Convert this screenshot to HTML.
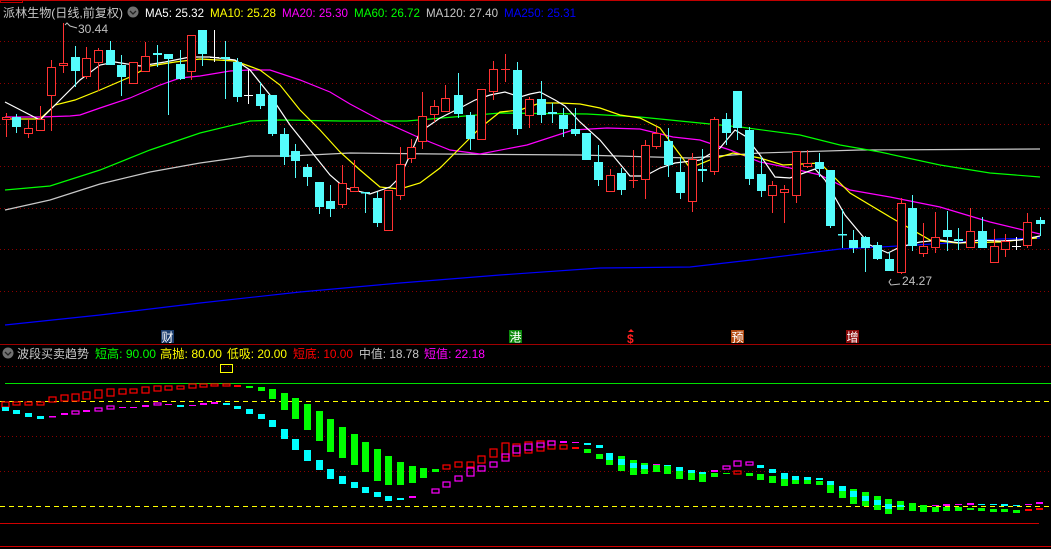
<!DOCTYPE html>
<html><head><meta charset="utf-8"><style>
html,body{margin:0;padding:0;background:#000;width:1051px;height:549px;overflow:hidden}
svg{display:block}
text{font-family:"Liberation Sans","Noto Sans CJK SC",sans-serif;font-size:12px}
.r line{stroke:#ff3232;stroke-width:1}
.r rect{fill:#000;stroke:#ff3232;stroke-width:1}
.c line{stroke:#54fcfc;stroke-width:1}
.c rect{fill:#54fcfc}
.w line{stroke:#fff;stroke-width:1}
.g{fill:#00ff00}.cy{fill:#00ffff}.m{fill:#ff00ff}.rd{fill:#ff0000}
.hm{fill:none;stroke:#ff00ff;stroke-width:1.2}.hr{fill:none;stroke:#ff0000;stroke-width:1.2}
</style></head><body>
<svg width="1051" height="549" xmlns="http://www.w3.org/2000/svg">
<rect width="1051" height="549" fill="#000"/>
<line x1="0" y1="0.5" x2="1051" y2="0.5" stroke="#c00000"/>
<rect x="0.5" y="0.5" width="22" height="2" fill="none" stroke="#c00000"/>
<g stroke="#8a0000" stroke-dasharray="1,3">
<line x1="0" y1="41.5" x2="1051" y2="41.5"/><line x1="0" y1="83.5" x2="1051" y2="83.5"/>
<line x1="0" y1="124.5" x2="1051" y2="124.5"/><line x1="0" y1="166.5" x2="1051" y2="166.5"/>
<line x1="0" y1="208.5" x2="1051" y2="208.5"/><line x1="0" y1="249.5" x2="1051" y2="249.5"/>
<line x1="0" y1="291.5" x2="1051" y2="291.5"/>
<line x1="0" y1="366.5" x2="1051" y2="366.5"/><line x1="0" y1="436.5" x2="1051" y2="436.5"/><line x1="0" y1="471.5" x2="1051" y2="471.5"/>
</g>
<g fill="none" stroke-width="1.2">
<polyline stroke="#0000ff" points="5,325 100,315 200,303 300,292 400,283 500,275 600,268 690,267 760,259 840,249 880,247 950,243 1000,239 1040,238"/>
<polyline stroke="#c8c8c8" points="5,210 50,200 100,184 150,172 200,163 250,156 290,156 350,153 440,154 580,155 690,158 760,153 860,150 1040,149"/>
<polyline stroke="#00ff00" points="5,190 50,186 100,170 150,150 200,133 250,121 280,120 340,121 407,121 500,113 587,114 640,117 690,122 740,127 800,135 840,145 880,152 940,165 990,173 1040,177"/>
<polyline stroke="#ff00ff" points="5,117 40,117 70,116 80,115 100,108 130,98 160,85 180,78 200,76 230,71 250,70 270,70 300,80 330,92 350,104 380,120 420,138 450,150 480,154 527,145 573,130 607,128 640,129 673,137 700,140 730,150 760,162 790,168 820,175 850,190 890,197 940,207 990,222 1040,234"/>
<polyline stroke="#ffff00" points="5,119 40,119 55,105 75,100 100,90 130,77 150,66 175,62 200,59 235,61 260,70 280,85 300,110 320,130 340,152 360,170 380,187 400,189 420,183 440,168 460,148 480,128 500,112 520,110 540,103 560,103 580,104 600,108 620,115 640,118 660,128 690,168 710,160 733,153 760,158 783,165 820,163 850,193 890,217 930,240 957,243 1000,242 1037,238"/>
<polyline stroke="#ffffff" points="5,102 40,120 60,100 80,80 100,65 115,62 140,66 165,62 190,57 210,57 235,60 250,70 270,95 290,125 310,150 330,175 345,188 370,194 390,187 400,177 410,155 420,132 440,118 460,108 475,100 490,95 505,92 520,97 530,94 540,92 555,100 565,106 580,122 600,140 615,158 630,176 645,176 660,168 675,163 700,160 720,148 735,130 745,136 760,155 775,177 790,178 815,169 825,180 845,215 870,245 888,253 900,247 920,242 940,240 960,243 980,240 1000,241 1020,240 1040,236"/>
</g>
<g class="r">
<line x1="6.5" y1="113" x2="6.5" y2="137"/><rect x="2.5" y="117.5" width="8" height="2"/>
<line x1="28.5" y1="119" x2="28.5" y2="138"/><rect x="24.5" y="128.5" width="8" height="5"/>
<line x1="40.5" y1="106" x2="40.5" y2="130"/><rect x="36.5" y="119.5" width="8" height="11"/>
<line x1="51.5" y1="60" x2="51.5" y2="131"/><rect x="47.5" y="67.5" width="8" height="28"/>
<line x1="63.5" y1="23" x2="63.5" y2="73"/><rect x="59.5" y="63.5" width="8" height="2"/>
<line x1="86.5" y1="47" x2="86.5" y2="79"/><rect x="82.5" y="58.5" width="8" height="18"/>
<line x1="98.5" y1="48" x2="98.5" y2="91"/><rect x="94.5" y="50.5" width="8" height="12"/>
<line x1="133.5" y1="62" x2="133.5" y2="83"/><rect x="129.5" y="62.5" width="8" height="21"/>
<line x1="145.5" y1="42" x2="145.5" y2="71"/><rect x="141.5" y="56.5" width="8" height="15"/>
<line x1="191.5" y1="35" x2="191.5" y2="80"/><rect x="187.5" y="35.5" width="8" height="36"/>
<line x1="342.5" y1="165" x2="342.5" y2="208"/><rect x="338.5" y="183.5" width="8" height="21"/>
<line x1="354.5" y1="160" x2="354.5" y2="191"/><rect x="350.5" y="187.5" width="8" height="4"/>
<line x1="388.5" y1="190" x2="388.5" y2="230"/><rect x="384.5" y="190.5" width="8" height="40"/>
<line x1="400.5" y1="147" x2="400.5" y2="200"/><rect x="396.5" y="164.5" width="8" height="31"/>
<line x1="411.5" y1="139" x2="411.5" y2="163"/><rect x="407.5" y="147.5" width="8" height="11"/>
<line x1="422.5" y1="92" x2="422.5" y2="149"/><rect x="418.5" y="116.5" width="8" height="25"/>
<line x1="434.5" y1="100" x2="434.5" y2="122"/><rect x="430.5" y="106.5" width="8" height="8"/>
<line x1="445.5" y1="85" x2="445.5" y2="111"/><rect x="441.5" y="98.5" width="8" height="13"/>
<line x1="481.5" y1="89" x2="481.5" y2="139"/><rect x="477.5" y="89.5" width="8" height="50"/>
<line x1="493.5" y1="61" x2="493.5" y2="100"/><rect x="489.5" y="69.5" width="8" height="22"/>
<line x1="505.5" y1="54" x2="505.5" y2="82"/><line x1="501" y1="69.5" x2="510" y2="69.5"/>
<line x1="529.5" y1="97" x2="529.5" y2="128"/><rect x="525.5" y="99.5" width="8" height="16"/>
<line x1="610.5" y1="169" x2="610.5" y2="191"/><rect x="606.5" y="175.5" width="8" height="16"/>
<line x1="633.5" y1="150" x2="633.5" y2="188"/><line x1="629" y1="180.5" x2="638" y2="180.5"/>
<line x1="645.5" y1="140" x2="645.5" y2="199"/><rect x="641.5" y="145.5" width="8" height="34"/>
<line x1="656.5" y1="127" x2="656.5" y2="149"/><rect x="652.5" y="133.5" width="8" height="13"/>
<line x1="692.5" y1="153" x2="692.5" y2="212"/><rect x="688.5" y="159.5" width="8" height="42"/>
<line x1="714.5" y1="117" x2="714.5" y2="175"/><rect x="710.5" y="119.5" width="8" height="52"/>
<line x1="772.5" y1="181" x2="772.5" y2="213"/><rect x="768.5" y="185.5" width="8" height="10"/>
<line x1="784.5" y1="185" x2="784.5" y2="223"/><rect x="780.5" y="189.5" width="8" height="3"/>
<line x1="796.5" y1="151" x2="796.5" y2="203"/><rect x="792.5" y="151.5" width="8" height="44"/>
<line x1="807.5" y1="150" x2="807.5" y2="168"/><rect x="803.5" y="163.5" width="8" height="3"/>
<line x1="901.5" y1="198" x2="901.5" y2="274"/><rect x="897.5" y="203.5" width="8" height="69"/>
<line x1="923.5" y1="223" x2="923.5" y2="257"/><rect x="919.5" y="246.5" width="8" height="7"/>
<line x1="935.5" y1="212" x2="935.5" y2="253"/><rect x="931.5" y="237.5" width="8" height="10"/>
<line x1="970.5" y1="208" x2="970.5" y2="247"/><rect x="966.5" y="231.5" width="8" height="16"/>
<line x1="994.5" y1="229" x2="994.5" y2="263"/><rect x="990.5" y="246.5" width="8" height="16"/>
<line x1="1005.5" y1="234" x2="1005.5" y2="257"/><rect x="1001.5" y="241.5" width="8" height="8"/>
<line x1="1027.5" y1="213" x2="1027.5" y2="248"/><rect x="1023.5" y="222.5" width="8" height="23"/>
</g>
<g class="c">
<line x1="16.5" y1="114" x2="16.5" y2="133"/><rect x="12" y="117" width="9" height="10"/>
<line x1="75.5" y1="46" x2="75.5" y2="87"/><rect x="71" y="57" width="9" height="14"/>
<line x1="110.5" y1="41" x2="110.5" y2="65"/><rect x="106" y="50" width="9" height="15"/>
<line x1="121.5" y1="55" x2="121.5" y2="96"/><rect x="117" y="65" width="9" height="12"/>
<line x1="157.5" y1="45" x2="157.5" y2="67"/><rect x="153" y="53" width="9" height="2"/>
<line x1="168.5" y1="54" x2="168.5" y2="115"/><rect x="164" y="54" width="9" height="5"/>
<line x1="180.5" y1="50" x2="180.5" y2="80"/><rect x="176" y="64" width="9" height="15"/>
<line x1="202.5" y1="30" x2="202.5" y2="66"/><rect x="198" y="30" width="9" height="24"/>
<line x1="225.5" y1="41" x2="225.5" y2="99"/><rect x="221" y="57" width="9" height="2"/>
<line x1="237.5" y1="58" x2="237.5" y2="102"/><rect x="233" y="62" width="9" height="35"/>
<line x1="260.5" y1="82" x2="260.5" y2="109"/><rect x="256" y="94" width="9" height="12"/>
<line x1="272.5" y1="95" x2="272.5" y2="136"/><rect x="268" y="95" width="9" height="39"/>
<line x1="284.5" y1="128" x2="284.5" y2="165"/><rect x="280" y="134" width="9" height="23"/>
<line x1="295.5" y1="144" x2="295.5" y2="178"/><rect x="291" y="151" width="9" height="10"/>
<line x1="307.5" y1="164" x2="307.5" y2="186"/><rect x="303" y="167" width="9" height="10"/>
<line x1="319.5" y1="182" x2="319.5" y2="214"/><rect x="315" y="182" width="9" height="25"/>
<line x1="330.5" y1="185" x2="330.5" y2="217"/><rect x="326" y="201" width="9" height="8"/>
<line x1="365.5" y1="192" x2="365.5" y2="213"/><rect x="361" y="192" width="9" height="1.5"/>
<line x1="377.5" y1="192" x2="377.5" y2="227"/><rect x="373" y="198" width="9" height="25"/>
<line x1="458.5" y1="73" x2="458.5" y2="118"/><rect x="454" y="95" width="9" height="19"/>
<line x1="470.5" y1="112" x2="470.5" y2="150"/><rect x="466" y="115" width="9" height="24"/>
<line x1="517.5" y1="62" x2="517.5" y2="135"/><rect x="513" y="70" width="9" height="59"/>
<line x1="541.5" y1="81" x2="541.5" y2="123"/><rect x="537" y="99" width="9" height="16"/>
<line x1="552.5" y1="103" x2="552.5" y2="123"/><rect x="548" y="112" width="9" height="2"/>
<line x1="563.5" y1="108" x2="563.5" y2="137"/><rect x="559" y="115" width="9" height="14"/>
<line x1="575.5" y1="108" x2="575.5" y2="136"/><rect x="571" y="129" width="9" height="5"/>
<line x1="586.5" y1="133" x2="586.5" y2="160"/><rect x="582" y="133" width="9" height="27"/>
<line x1="598.5" y1="145" x2="598.5" y2="186"/><rect x="594" y="162" width="9" height="18"/>
<line x1="621.5" y1="168" x2="621.5" y2="195"/><rect x="617" y="173" width="9" height="17"/>
<line x1="668.5" y1="128" x2="668.5" y2="177"/><rect x="664" y="141" width="9" height="24"/>
<line x1="680.5" y1="158" x2="680.5" y2="199"/><rect x="676" y="172" width="9" height="21"/>
<line x1="702.5" y1="149" x2="702.5" y2="182"/><rect x="698" y="169" width="9" height="2"/>
<line x1="726.5" y1="113" x2="726.5" y2="145"/><rect x="722" y="119" width="9" height="14"/>
<line x1="737.5" y1="91" x2="737.5" y2="140"/><rect x="733" y="91" width="9" height="37"/>
<line x1="749.5" y1="127" x2="749.5" y2="185"/><rect x="745" y="130" width="9" height="49"/>
<line x1="761.5" y1="157" x2="761.5" y2="197"/><rect x="757" y="174" width="9" height="17"/>
<line x1="819.5" y1="153" x2="819.5" y2="177"/><rect x="815" y="162" width="9" height="7"/>
<line x1="830.5" y1="170" x2="830.5" y2="228"/><rect x="826" y="170" width="9" height="56"/>
<line x1="842.5" y1="209" x2="842.5" y2="248"/><rect x="838" y="234" width="9" height="1.5"/>
<line x1="853.5" y1="230" x2="853.5" y2="253"/><rect x="849" y="240" width="9" height="8"/>
<line x1="865.5" y1="236" x2="865.5" y2="272"/><rect x="861" y="237" width="9" height="11"/>
<line x1="877.5" y1="242" x2="877.5" y2="260"/><rect x="873" y="245" width="9" height="14"/>
<line x1="889.5" y1="252" x2="889.5" y2="271"/><rect x="885" y="259" width="9" height="12"/>
<line x1="912.5" y1="195" x2="912.5" y2="251"/><rect x="908" y="208" width="9" height="38"/>
<line x1="947.5" y1="211" x2="947.5" y2="251"/><rect x="943" y="230" width="9" height="7"/>
<line x1="958.5" y1="228" x2="958.5" y2="250"/><rect x="954" y="239" width="9" height="2"/>
<line x1="982.5" y1="217" x2="982.5" y2="248"/><rect x="978" y="231" width="9" height="17"/>
<line x1="1040.5" y1="217" x2="1040.5" y2="236"/><rect x="1036" y="220" width="9" height="4"/>
</g>
<g class="w">
<line x1="214.5" y1="30" x2="214.5" y2="62"/><line x1="210" y1="57.5" x2="219" y2="57.5"/>
<line x1="248.5" y1="70" x2="248.5" y2="104"/><line x1="244" y1="95.5" x2="253" y2="95.5"/>
<line x1="1016.5" y1="237" x2="1016.5" y2="250"/><line x1="1012" y1="246.5" x2="1021" y2="246.5"/>
</g>
<polyline points="65,25 67,23 70,26 77,28" fill="none" stroke="#c0c0c0"/>
<text x="78" y="33" fill="#c0c0c0">30.44</text>
<polyline points="891,279 889,282 891,285 900,284" fill="none" stroke="#c0c0c0"/>
<text x="902" y="285" fill="#c0c0c0">24.27</text>
<text x="3" y="17" fill="#c8c8c8" font-size="13" textLength="120" lengthAdjust="spacingAndGlyphs">派林生物(日线,前复权)</text>
<circle cx="133" cy="12" r="5.5" fill="#707070"/><polyline points="130,11 133,14 136,11" fill="none" stroke="#222" stroke-width="1.3"/>
<text x="145" y="17" fill="#ffffff" textLength="59" lengthAdjust="spacingAndGlyphs">MA5: 25.32</text>
<text x="210" y="17" fill="#ffff00" textLength="66" lengthAdjust="spacingAndGlyphs">MA10: 25.28</text>
<text x="282" y="17" fill="#ff00ff" textLength="66" lengthAdjust="spacingAndGlyphs">MA20: 25.30</text>
<text x="354" y="17" fill="#00ff00" textLength="66" lengthAdjust="spacingAndGlyphs">MA60: 26.72</text>
<text x="426" y="17" fill="#c8c8c8" textLength="72" lengthAdjust="spacingAndGlyphs">MA120: 27.40</text>
<text x="504" y="17" fill="#0000ff" textLength="72" lengthAdjust="spacingAndGlyphs">MA250: 25.31</text>
<rect x="161" y="330" width="13" height="13" fill="#1a3c6c"/><text x="161.5" y="341.5" fill="#fff">财</text>
<rect x="509" y="330" width="13" height="13" fill="#0b8a0b"/><text x="509.5" y="341.5" fill="#fff">港</text>
<text x="627" y="343" fill="#ff2020" font-weight="bold">$</text><polygon points="631,329 628,332 634,332" fill="#ff2020"/>
<rect x="731" y="330" width="13" height="13" fill="#b24a12"/><text x="731.5" y="341.5" fill="#fff">预</text>
<rect x="846" y="330" width="13" height="13" fill="#8a0a0a"/><text x="846.5" y="341.5" fill="#fff">增</text>
<line x1="0" y1="344.5" x2="1051" y2="344.5" stroke="#a00000"/>
<circle cx="8" cy="353" r="5.5" fill="#707070"/><polyline points="5,352 8,355 11,352" fill="none" stroke="#222" stroke-width="1.3"/>
<text x="17" y="358" fill="#c8c8c8" textLength="72" lengthAdjust="spacingAndGlyphs">波段买卖趋势</text>
<text x="95" y="358" fill="#00ff00" textLength="61" lengthAdjust="spacingAndGlyphs">短高: 90.00</text>
<text x="160" y="358" fill="#ffff00" textLength="62" lengthAdjust="spacingAndGlyphs">高抛: 80.00</text>
<text x="227" y="358" fill="#ffff00" textLength="60" lengthAdjust="spacingAndGlyphs">低吸: 20.00</text>
<text x="293" y="358" fill="#ff0000" textLength="60" lengthAdjust="spacingAndGlyphs">短底: 10.00</text>
<text x="359" y="358" fill="#c8c8c8" textLength="60" lengthAdjust="spacingAndGlyphs">中值: 18.78</text>
<text x="424" y="358" fill="#ff00ff" textLength="61" lengthAdjust="spacingAndGlyphs">短值: 22.18</text>
<rect x="220.5" y="364.5" width="12" height="8" fill="none" stroke="#ffff00"/>
<line x1="5" y1="383.5" x2="1051" y2="383.5" stroke="#00e000"/>
<line x1="0" y1="401.5" x2="1051" y2="401.5" stroke="#ffff00" stroke-dasharray="5,4"/>
<line x1="0" y1="506.5" x2="1051" y2="506.5" stroke="#ffff00" stroke-dasharray="5,4"/>
<line x1="0" y1="523.5" x2="1039" y2="523.5" stroke="#d00000"/>
<line x1="0" y1="546.5" x2="1051" y2="546.5" stroke="#d00000"/>
<g class="hr">
<rect x="2" y="402" width="7" height="5"/><rect x="13" y="402" width="7" height="3"/><rect x="25" y="402" width="7" height="3"/><rect x="37" y="402" width="7" height="3"/>
<rect x="49" y="397" width="7" height="5"/><rect x="61" y="395" width="7" height="6"/><rect x="72" y="394" width="7" height="7"/><rect x="83" y="392" width="7" height="7"/>
<rect x="95" y="390" width="7" height="8"/><rect x="107" y="389" width="7" height="7"/><rect x="119" y="389" width="7" height="5"/><rect x="130" y="389" width="7" height="4"/>
<rect x="142" y="387" width="7" height="6"/><rect x="154" y="386" width="7" height="5"/><rect x="165" y="386" width="7" height="4"/><rect x="177" y="386" width="7" height="3"/>
<rect x="189" y="384" width="7" height="4"/><rect x="200" y="384" width="7" height="3"/><rect x="211" y="384" width="7" height="2"/><rect x="223" y="384" width="7" height="2"/>
<rect x="443" y="465" width="7" height="4"/><rect x="455" y="462" width="7" height="5"/><rect x="467" y="462" width="7" height="5"/><rect x="478" y="456" width="7" height="7"/>
<rect x="490" y="449" width="7" height="8"/><rect x="502" y="443" width="7" height="14"/><rect x="513" y="444" width="7" height="12"/><rect x="525" y="442" width="7" height="11"/>
<rect x="537" y="441" width="7" height="10"/><rect x="548" y="441" width="7" height="8"/><rect x="560" y="445" width="7" height="4"/>
<rect x="734" y="471" width="7" height="3"/>
</g>
<rect class="rd" x="234" y="385" width="7" height="2"/>
<rect class="rd" x="572" y="447" width="7" height="2"/>
<rect class="rd" x="1025" y="509" width="7" height="2"/><rect class="rd" x="1036" y="508" width="7" height="2"/>
<g class="g">
<rect x="246" y="386" width="7" height="2"/><rect x="258" y="387" width="7" height="4"/><rect x="269" y="389" width="7" height="10"/>
<rect x="281" y="393" width="7" height="17"/><rect x="292" y="398" width="7" height="21"/><rect x="304" y="404" width="7" height="26"/>
<rect x="316" y="411" width="7" height="30"/><rect x="327" y="419" width="7" height="33"/><rect x="339" y="427" width="7" height="31"/>
<rect x="351" y="434" width="7" height="31"/><rect x="362" y="442" width="7" height="30"/><rect x="374" y="449" width="7" height="32"/>
<rect x="385" y="456" width="7" height="29"/><rect x="397" y="462" width="7" height="23"/><rect x="409" y="466" width="7" height="17"/>
<rect x="420" y="468" width="7" height="10"/><rect x="432" y="469" width="7" height="3"/>
<rect x="584" y="449" width="7" height="4"/><rect x="596" y="454" width="7" height="5"/><rect x="606" y="460" width="7" height="5"/>
<rect x="618" y="456" width="7" height="15"/><rect x="630" y="460" width="7" height="15"/><rect x="641" y="463" width="7" height="11"/>
<rect x="653" y="465" width="7" height="7"/><rect x="664" y="465" width="7" height="9"/><rect x="676" y="471" width="7" height="8"/>
<rect x="688" y="473" width="7" height="7"/><rect x="699" y="474" width="7" height="8"/><rect x="711" y="473" width="7" height="4"/>
<rect x="723" y="473" width="7" height="1"/><rect x="746" y="473" width="7" height="3"/><rect x="757" y="474" width="7" height="6"/>
<rect x="769" y="476" width="7" height="7"/><rect x="781" y="479" width="7" height="7"/><rect x="792" y="480" width="7" height="4"/>
<rect x="804" y="480" width="7" height="4"/><rect x="816" y="481" width="7" height="4"/><rect x="827" y="485" width="7" height="8"/>
<rect x="839" y="491" width="7" height="7"/><rect x="850" y="489" width="7" height="15"/><rect x="862" y="492" width="7" height="14"/>
<rect x="874" y="496" width="7" height="14"/><rect x="885" y="499" width="7" height="15"/><rect x="897" y="501" width="7" height="9"/>
<rect x="909" y="503" width="7" height="8"/><rect x="920" y="505" width="7" height="7"/><rect x="932" y="507" width="7" height="5"/>
<rect x="943" y="507" width="7" height="4"/><rect x="955" y="507" width="7" height="4"/><rect x="967" y="508" width="7" height="2"/>
<rect x="978" y="508" width="7" height="3"/><rect x="990" y="509" width="7" height="3"/><rect x="1001" y="509" width="7" height="3"/><rect x="1013" y="510" width="7" height="3"/>
</g>
<g class="cy">
<rect x="2" y="407" width="7" height="4"/><rect x="13" y="410" width="7" height="4"/><rect x="25" y="413" width="7" height="4"/><rect x="37" y="416" width="7" height="3"/>
<rect x="177" y="405" width="7" height="2"/><rect x="223" y="403" width="7" height="2"/><rect x="234" y="406" width="7" height="3"/>
<rect x="246" y="409" width="7" height="5"/><rect x="258" y="414" width="7" height="5"/><rect x="269" y="420" width="7" height="7"/>
<rect x="281" y="429" width="7" height="10"/><rect x="292" y="439" width="7" height="11"/><rect x="304" y="450" width="7" height="11"/>
<rect x="316" y="460" width="7" height="10"/><rect x="327" y="469" width="7" height="10"/><rect x="339" y="476" width="7" height="8"/>
<rect x="351" y="482" width="7" height="6"/><rect x="362" y="487" width="7" height="6"/><rect x="374" y="492" width="7" height="5"/>
<rect x="385" y="496" width="7" height="5"/><rect x="397" y="498" width="7" height="2"/>
<rect x="584" y="443" width="7" height="2"/><rect x="596" y="445" width="7" height="3"/><rect x="606" y="453" width="7" height="7"/>
<rect x="618" y="459" width="7" height="6"/><rect x="630" y="463" width="7" height="5"/><rect x="641" y="465" width="7" height="4"/>
<rect x="664" y="465" width="7" height="1"/><rect x="676" y="467" width="7" height="4"/><rect x="688" y="470" width="7" height="3"/><rect x="699" y="472" width="7" height="2"/>
<rect x="757" y="465" width="7" height="3"/><rect x="769" y="469" width="7" height="4"/><rect x="781" y="473" width="7" height="6"/>
<rect x="792" y="476" width="7" height="4"/><rect x="804" y="477" width="7" height="3"/><rect x="816" y="478" width="7" height="2"/>
<rect x="827" y="481" width="7" height="4"/><rect x="839" y="486" width="7" height="5"/><rect x="850" y="491" width="7" height="6"/>
<rect x="862" y="496" width="7" height="5"/><rect x="874" y="500" width="7" height="5"/><rect x="885" y="504" width="7" height="5"/>
<rect x="897" y="505" width="7" height="2"/><rect x="978" y="504" width="7" height="1"/><rect x="990" y="504" width="7" height="1"/><rect x="1001" y="504" width="7" height="2"/><rect x="1013" y="505" width="7" height="1"/>
</g>
<g class="m">
<rect x="49" y="416" width="7" height="1.5"/><rect x="61" y="413" width="7" height="2"/><rect x="83" y="410" width="7" height="2"/>
<rect x="119" y="407" width="7" height="1"/><rect x="130" y="407" width="7" height="1"/><rect x="142" y="405" width="7" height="2"/>
<rect x="165" y="404" width="7" height="1"/><rect x="189" y="405" width="7" height="1"/><rect x="200" y="403" width="7" height="2"/><rect x="211" y="402" width="7" height="2"/>
<rect x="409" y="496" width="7" height="2"/><rect x="560" y="441" width="7" height="2"/><rect x="572" y="442" width="7" height="1"/>
<rect x="653" y="464" width="7" height="1"/><rect x="711" y="470" width="7" height="2"/>
<rect x="932" y="505" width="7" height="1"/><rect x="943" y="504" width="7" height="2"/><rect x="955" y="504" width="7" height="1"/>
<rect x="967" y="503" width="7" height="2"/><rect x="1025" y="504" width="7" height="1"/><rect x="1036" y="502" width="7" height="2"/>
</g>
<g class="hm">
<rect x="72" y="411" width="7" height="3"/><rect x="95" y="408" width="7" height="3"/><rect x="107" y="406" width="7" height="3"/><rect x="154" y="403" width="7" height="2"/>
<rect x="432" y="489" width="7" height="4"/><rect x="443" y="482" width="7" height="5"/><rect x="455" y="476" width="7" height="5"/><rect x="467" y="468" width="7" height="8"/>
<rect x="478" y="466" width="7" height="5"/><rect x="490" y="462" width="7" height="5"/><rect x="502" y="454" width="7" height="7"/><rect x="513" y="446" width="7" height="7"/>
<rect x="525" y="444" width="7" height="6"/><rect x="537" y="443" width="7" height="4"/><rect x="548" y="441" width="7" height="4"/>
<rect x="723" y="466" width="7" height="3"/><rect x="734" y="461" width="7" height="5"/><rect x="746" y="462" width="7" height="3"/>
</g>
</svg>
</body></html>
